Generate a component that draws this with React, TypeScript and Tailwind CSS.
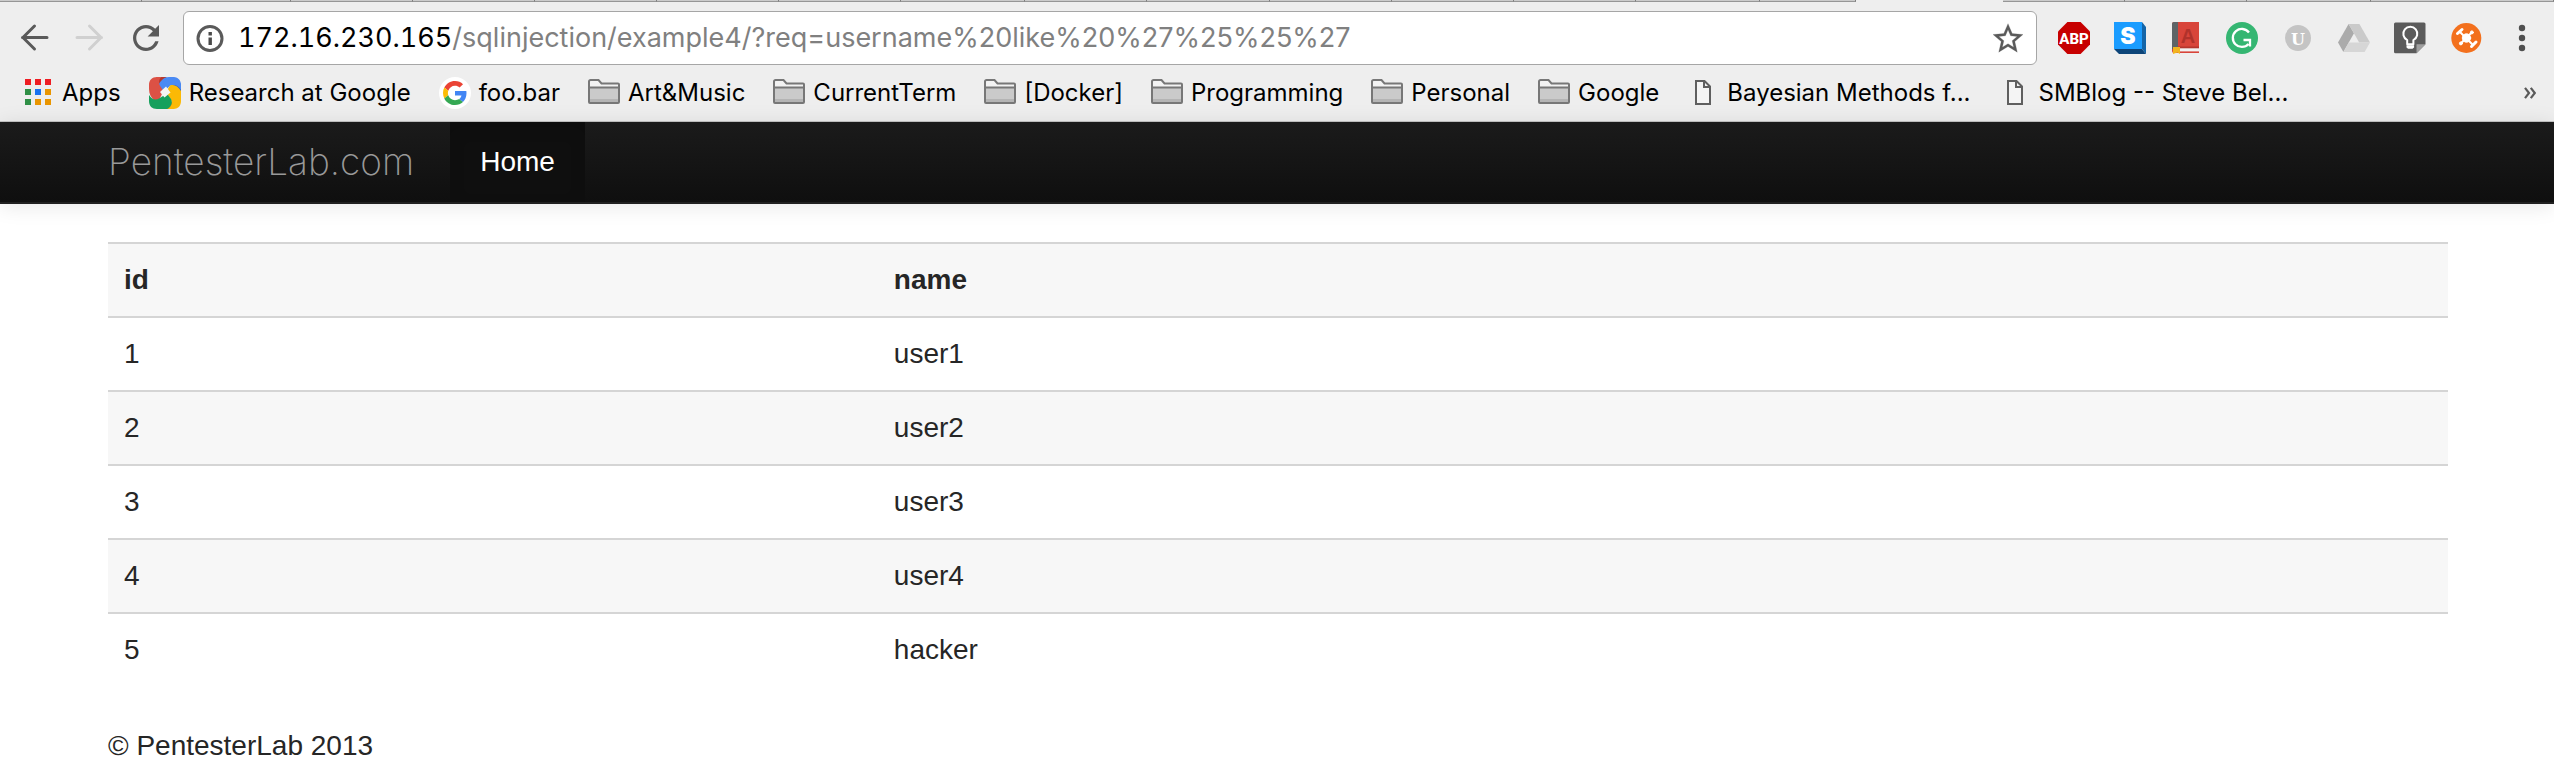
import type { ReactNode } from "react";

const tabsBefore = ["grow-[142]", "grow-[149]", "grow-[122]", "grow-[122]", "grow-[122]", "grow-[122]", "grow-[122]", "grow-[124]", "grow-[122]", "grow-[122]", "grow-[122]", "grow-[122]", "grow-[122]", "grow-[124]", "grow-[96]"];
const tabsAfter = ["grow-[122]", "grow-[122]", "grow-[124]", "grow-[183]"];

function TabStrip() {
  return (
    <div className="flex h-[2px]" aria-hidden="true">
      {tabsBefore.map((w, i) => (
        <div key={i} className={`${w} basis-0 border-r border-b border-r-[#7f7f7f] border-b-[#969696] bg-[#cbcbcb]`} />
      ))}
      <div className="grow-[148] basis-0 bg-[#eeeeee]" />
      {tabsAfter.map((w, i) => (
        <div key={i} className={`${w} basis-0 border-r border-b border-r-[#7f7f7f] border-b-[#969696] bg-[#cbcbcb]`} />
      ))}
    </div>
  );
}

function ArrowIcon({ flip = false }: { flip?: boolean }) {
  return (
    <svg viewBox="0 0 32 32" className="size-8" fill="none" stroke={flip ? "#d0d0d0" : "#5a5a5a"} strokeWidth="3">
      <path d={flip ? "M3 15.5H27.5M15.5 4 27 15.5 15.5 27" : "M29 15.5H4.5M16.5 4 5 15.5 16.5 27"} strokeLinecap="round" strokeLinejoin="miter" />
    </svg>
  );
}

function ReloadIcon() {
  return (
    <svg viewBox="2.15 2.15 19.7 19.7" className="size-8" fill="#5a5a5a">
      <path d="M17.65 6.35C16.2 4.9 14.21 4 12 4c-4.42 0-7.99 3.58-7.99 8s3.57 8 7.99 8c3.73 0 6.84-2.55 7.73-6h-2.08c-.82 2.33-3.04 4-5.65 4-3.31 0-6-2.69-6-6s2.69-6 6-6c1.66 0 3.14.69 4.22 1.78L13 11h7V4l-2.35 2.35z" />
    </svg>
  );
}

function InfoIcon() {
  return (
    <svg viewBox="0 0 28 28" className="size-7 shrink-0">
      <circle cx="14" cy="14.5" r="12" fill="none" stroke="#5a5a5a" strokeWidth="3" />
      <path d="M12.5 8h3.4v3.4h-3.4zM12.5 13.4h3.4V21h-3.4z" fill="#4a4a4a" />
    </svg>
  );
}

function StarIcon() {
  return (
    <svg viewBox="1.33 0.9 21.33 21.33" className="size-8" fill="#5a5a5a" stroke="#5a5a5a" strokeWidth=".15">
      <path d="M22 9.24l-7.19-.62L12 2 9.19 8.63 2 9.24l5.46 4.73L5.82 21 12 17.27 18.18 21l-1.63-7.03L22 9.24zM12 15.4l-3.76 2.27 1-4.28-3.32-2.88 4.38-.38L12 6.1l1.71 4.04 4.38.38-3.32 2.88 1 4.28L12 15.4z" />
    </svg>
  );
}

function AdblockIcon() {
  return (
    <svg viewBox="0 0 32 32" className="size-8">
      <path d="M9.4 0h13.2L32 9.4v13.2L22.6 32H9.4L0 22.6V9.4z" fill="#c70000" />
      <text x="16" y="21.6" textAnchor="middle" fontFamily="Roboto, sans-serif" fontWeight="800" fontSize="15" fill="#fff">ABP</text>
    </svg>
  );
}

function CubeIcon() {
  return (
    <svg viewBox="0 0 32 32" className="size-8">
      <path d="M28 0l4 5v27l-4-5z" fill="#1465a8" />
      <path d="M0 27h28l4 5H5z" fill="#0d4579" />
      <path d="M0 0h28v27H0z" fill="#1a9cff" />
      <text x="13.8" y="22" textAnchor="middle" fontFamily="Inter, sans-serif" fontWeight="900" fontSize="23" fill="#fff">S</text>
    </svg>
  );
}

function DictionaryIcon() {
  return (
    <svg viewBox="0 0 32 32" className="size-8">
      <path d="M2 2a2 2 0 0 1 2-2h25v31H4a2 2 0 0 1-2-2z" fill="#d8443a" />
      <path d="M2 2a2 2 0 0 1 2-2h4v27H2z" fill="#5e6466" />
      <path d="M8 26h21v3.4H8z" fill="#f1f1f1" />
      <path d="M8 24.5h21v1.8H8z" fill="#b5352d" />
      <path d="M3 25h7v7l-2.6-1.6L3 32z" fill="#f2b41e" />
      <text x="18" y="20.5" textAnchor="middle" fontFamily="Liberation Sans, sans-serif" fontWeight="700" fontSize="20" fill="#b0322b">A</text>
    </svg>
  );
}

function GrammarIcon() {
  return (
    <svg viewBox="0 0 32 32" className="size-8">
      <circle cx="16" cy="16" r="16" fill="#35b672" />
      <path d="M23 10.5A9 9 0 1 0 22.5 22M17.5 18H24V24.5" fill="none" stroke="#fff" strokeWidth="2.3" />
    </svg>
  );
}

function UIcon() {
  return (
    <svg viewBox="0 0 32 32" className="size-8">
      <circle cx="16" cy="16" r="13" fill="#c4c4c4" />
      <text x="16" y="22.8" textAnchor="middle" fontFamily="DejaVu Serif, serif" fontWeight="700" fontSize="16" fill="#fff">U</text>
    </svg>
  );
}

function DriveIcon() {
  return (
    <svg viewBox="0 0 32 32" className="size-8">
      <path d="M10.6 2 16 11.3 5.4 30 0 20.6z" fill="#ababab" />
      <path d="M10.6 2h10.8L32 20.6H21.2z" fill="#cacaca" />
      <path d="M10.7 20.6H32L26.6 30H5.4z" fill="#d6d6d6" />
    </svg>
  );
}

function KeepIcon() {
  return (
    <svg viewBox="0 0 32 32" className="size-8">
      <path d="M1.5.5H30A1.5 1.5 0 0 1 31.5 2v20.3l-9 9H1.5A1.5 1.5 0 0 1 0 29.8V2A1.5 1.5 0 0 1 1.5.5z" fill="#5b5b5b" />
      <path d="M22.5 22.3h9l-9 9z" fill="#9f9f9f" />
      <path d="M13.2 22.3v-4.2a7 7 0 1 1 6.2 0v4.2z" fill="none" stroke="#fff" strokeWidth="2" strokeLinejoin="round" />
      <path d="M12.5 23.3h7.6v2.2l-1.6 1.3h-4.4l-1.6-1.3z" fill="#fff" />
    </svg>
  );
}

function DroneIcon() {
  return (
    <svg viewBox="0 0 32 32" className="size-8">
      <circle cx="16.3" cy="16" r="15" fill="#f3701d" />
      <g stroke="#fff" strokeLinecap="round" fill="#fff">
        <path d="M10 10l12.5 12.5M11 21.3 21.7 10.5" strokeWidth="2" />
        <path d="M7.5 11.5 12 7.5M21.5 24.5l4.5-4.5" strokeWidth="3" />
        <circle cx="16.5" cy="16" r="4.2" />
        <circle cx="21.9" cy="10.4" r="1.5" />
        <circle cx="10.9" cy="21.4" r="1.5" />
      </g>
    </svg>
  );
}

function MenuIcon() {
  return (
    <svg viewBox="0 0 32 32" className="size-8" fill="#4f4f4f">
      <circle cx="16" cy="6" r="3.2" />
      <circle cx="16" cy="16" r="3.2" />
      <circle cx="16" cy="26" r="3.2" />
    </svg>
  );
}

const extensions: { label: string; icon: ReactNode }[] = [
  { label: "Adblock Plus", icon: <AdblockIcon /> },
  { label: "S", icon: <CubeIcon /> },
  { label: "Dictionary", icon: <DictionaryIcon /> },
  { label: "Grammarly", icon: <GrammarIcon /> },
  { label: "U", icon: <UIcon /> },
  { label: "Drive", icon: <DriveIcon /> },
  { label: "Keep", icon: <KeepIcon /> },
  { label: "Drone", icon: <DroneIcon /> },
  { label: "Menu", icon: <MenuIcon /> },
];

function AppsIcon() {
  const colors = ["#ee1d23", "#ee1d23", "#ee1d23", "#2f8f46", "#1a73f0", "#e99500", "#2f8f46", "#e99500", "#e99500"];
  return (
    <svg viewBox="0 0 32 32" className="size-8 shrink-0">
      {colors.map((c, i) => (
        <rect key={i} x={3 + (i % 3) * 10} y={2 + Math.floor(i / 3) * 10} width="6" height="6" fill={c} />
      ))}
    </svg>
  );
}

function ResearchIcon() {
  return (
    <svg viewBox="0 0 32 32" className="size-8 shrink-0">
      <path d="M22 0C28 0 32 4 32 10v8L22 7z" fill="#3161c4" />
      <path d="M32 20c0 7-4 12-10 12h-6l9-10z" fill="#ee8f00" />
      <path d="M8 0h10L9 9 4 4z" fill="#b5392c" />
      <path d="M12.5 3.5C14.5 1 17 0 20 0h4c5 0 8 3 8 8v5C29 8 25 7 21 9l-6 5-5.5-4.5c0-2.5 1-4 3-6z" fill="#4a8af4" />
      <path d="M8 0h4.5C9.5 2.5 9.3 6 11.5 9.5L14.5 14l-4 8L6 24C2 21 0 17 0 12V8C0 3 3 0 8 0z" fill="#dc5145" />
      <path d="M21 8.5c4-1.5 8 .5 11 5.5v10c0 5-3 8-8 8h-5c4-3 5-6 2.5-10L17 15z" fill="#fbb905" />
      <path d="M0 18c3 4.5 6.5 5.5 10 3.5l8-5 4 5.5c2 4 0 8-4 10H8c-5 0-8-3-8-8z" fill="#16a05d" />
      <path d="M17 9.5 21.5 15.5 15.5 20.5 11 15z" fill="#f4f4f4" />
    </svg>
  );
}

function GoogleIcon() {
  return (
    <svg viewBox="0 0 64 64" className="size-8 shrink-0">
      <circle cx="32" cy="32" r="32" fill="#fff" />
      <g transform="translate(8 8)">
        <path fill="#EA4335" d="M24 9.5c3.54 0 6.71 1.22 9.21 3.6l6.85-6.85C35.9 2.38 30.47 0 24 0 14.62 0 6.51 5.38 2.56 13.22l7.98 6.19C12.43 13.72 17.74 9.5 24 9.5z" />
        <path fill="#4285F4" d="M46.98 24.55c0-1.57-.15-3.09-.38-4.55H24v9.02h12.94c-.58 2.96-2.26 5.48-4.78 7.18l7.73 6c4.51-4.18 7.09-10.36 7.09-17.65z" />
        <path fill="#FBBC05" d="M10.53 28.59c-.48-1.45-.76-2.99-.76-4.59s.27-3.14.76-4.59l-7.98-6.19C.92 16.46 0 20.12 0 24c0 3.88.92 7.54 2.56 10.78l7.97-6.19z" />
        <path fill="#34A853" d="M24 48c6.48 0 11.93-2.13 15.89-5.81l-7.73-6c-2.15 1.45-4.92 2.3-8.16 2.3-6.26 0-11.57-4.22-13.47-9.91l-7.98 6.19C6.51 42.62 14.62 48 24 48z" />
      </g>
    </svg>
  );
}

function FolderIcon() {
  return (
    <svg viewBox="0 0 32 32" className="size-8 shrink-0">
      <path d="M1 10h30v16H1z" fill="#cacaca" />
      <path d="M2 22h28v4H2z" fill="#b4b4b4" />
      <path d="M1 10.5V4.5A1.5 1.5 0 0 1 2.5 3h8l3 3.5H30a1 1 0 0 1 1 1v3z" fill="#f2f2f2" />
      <path d="M1 4.5A1.5 1.5 0 0 1 2.5 3h8l3 3.5H30a1 1 0 0 1 1 1V25a1 1 0 0 1-1 1H2a1 1 0 0 1-1-1zM1 10.5h30" fill="none" stroke="#777" strokeWidth="2" />
    </svg>
  );
}

function PageIcon() {
  return (
    <svg viewBox="0 0 32 32" className="size-8 shrink-0" fill="none" stroke="#5f5f5f" strokeWidth="2">
      <path d="M9 4h8.5L23 9.500V27H9z" fill="#f4f4f4" />
      <path d="M17 4v6h6" />
    </svg>
  );
}

const bookmarks: { label: string; icon: ReactNode }[] = [
  { label: "Apps", icon: <AppsIcon /> },
  { label: "Research at Google", icon: <ResearchIcon /> },
  { label: "foo.bar", icon: <GoogleIcon /> },
  { label: "Art&Music", icon: <FolderIcon /> },
  { label: "CurrentTerm", icon: <FolderIcon /> },
  { label: "[Docker]", icon: <FolderIcon /> },
  { label: "Programming", icon: <FolderIcon /> },
  { label: "Personal", icon: <FolderIcon /> },
  { label: "Google", icon: <FolderIcon /> },
  { label: "Bayesian Methods f...", icon: <PageIcon /> },
  { label: "SMBlog -- Steve Bel...", icon: <PageIcon /> },
];

const users = [
  { id: 1, name: "user1" },
  { id: 2, name: "user2" },
  { id: 3, name: "user3" },
  { id: 4, name: "user4" },
  { id: 5, name: "hacker" },
];

function BrowserChrome() {
  return (
    <header className="border-b border-[#c4c4c4] bg-[#eeeeee] font-[Inter,sans-serif]">
      <TabStrip />
      <div className="flex items-center gap-[21px] pt-[9px] pr-4 pl-[18px]">
        <div className="flex gap-6">
          <button type="button" aria-label="Back"><ArrowIcon /></button>
          <button type="button" aria-label="Forward" disabled><ArrowIcon flip /></button>
          <button type="button" aria-label="Reload"><ReloadIcon /></button>
        </div>
        <div className="flex h-[54px] min-w-0 flex-1 items-center rounded-md border border-[#a6a6a6] bg-white px-3">
          <InfoIcon />
          <span className="ml-[14px] text-[27px] leading-8 text-black tabular-nums">172.16.230.165</span>
          <input
            type="text"
            aria-label="Address"
            defaultValue="/sqlinjection/example4/?req=username%20like%20%27%25%25%27"
            className="min-w-0 flex-1 bg-transparent text-[27px] leading-8 text-[#808080] outline-none"
          />
          <button type="button" aria-label="Bookmark this page"><StarIcon /></button>
        </div>
        <div className="flex gap-6">
          {extensions.map((e) => (
            <button key={e.label} type="button" aria-label={e.label}>{e.icon}</button>
          ))}
        </div>
      </div>
      <nav aria-label="Bookmarks" className="flex h-14 items-center pr-[18px] pl-[22px]">
        <div className="flex min-w-0 flex-1 gap-7">
          {bookmarks.map((b) => (
            <a key={b.label} href="#" className="flex items-center gap-2 text-2xl whitespace-nowrap text-black">
              {b.icon}
              {b.label}
            </a>
          ))}
        </div>
        <button type="button" aria-label="More bookmarks">
          <svg viewBox="0 0 12 12" className="size-3" fill="none" stroke="#5a5a5a" strokeWidth="2.2">
            <path d="M1 .8 5 6l-4 5.2M6.800.8l4 5.2-4 5.2" />
          </svg>
        </button>
      </nav>
    </header>
  );
}

export default function App() {
  return (
    <div className="min-h-screen bg-white font-['Liberation_Sans',sans-serif] text-[28px] leading-10 text-[#262626]">
      <BrowserChrome />
      <nav className="flex h-[82px] items-stretch border-b-2 border-[#202020] bg-linear-to-b from-[#1b1b1b] to-[#0f0f0f] pl-[108px] shadow-[0_2px_20px_rgba(0,0,0,0.1)]">
        <a href="#" className="flex items-center pr-9 font-[Inter,sans-serif] text-[37px] font-extralight text-[#999999]">
          PentesterLab.com
        </a>
        <a href="#" className="flex items-center bg-[#0f0f0f] px-[30px] text-white shadow-[inset_0_6px_16px_rgba(0,0,0,0.125)]">
          Home
        </a>
      </nav>
      <main className="pt-[38px] pr-[106px] pl-[108px]">
        <table className="w-full border-separate border-spacing-0 text-left">
          <thead>
            <tr className="bg-[#f7f7f7]">
              <th scope="col" className="w-[32.9%] border-t-2 border-[#d5d5d5] p-4 font-bold">id</th>
              <th scope="col" className="border-t-2 border-[#d5d5d5] p-4 font-bold">name</th>
            </tr>
          </thead>
          <tbody>
            {users.map((u) => (
              <tr key={u.id} className="even:bg-[#f7f7f7]">
                <td className="border-t-2 border-[#d5d5d5] p-4">{u.id}</td>
                <td className="border-t-2 border-[#d5d5d5] p-4">{u.name}</td>
              </tr>
            ))}
          </tbody>
        </table>
        <footer className="mt-10">
          <p>© PentesterLab 2013</p>
        </footer>
      </main>
    </div>
  );
}
